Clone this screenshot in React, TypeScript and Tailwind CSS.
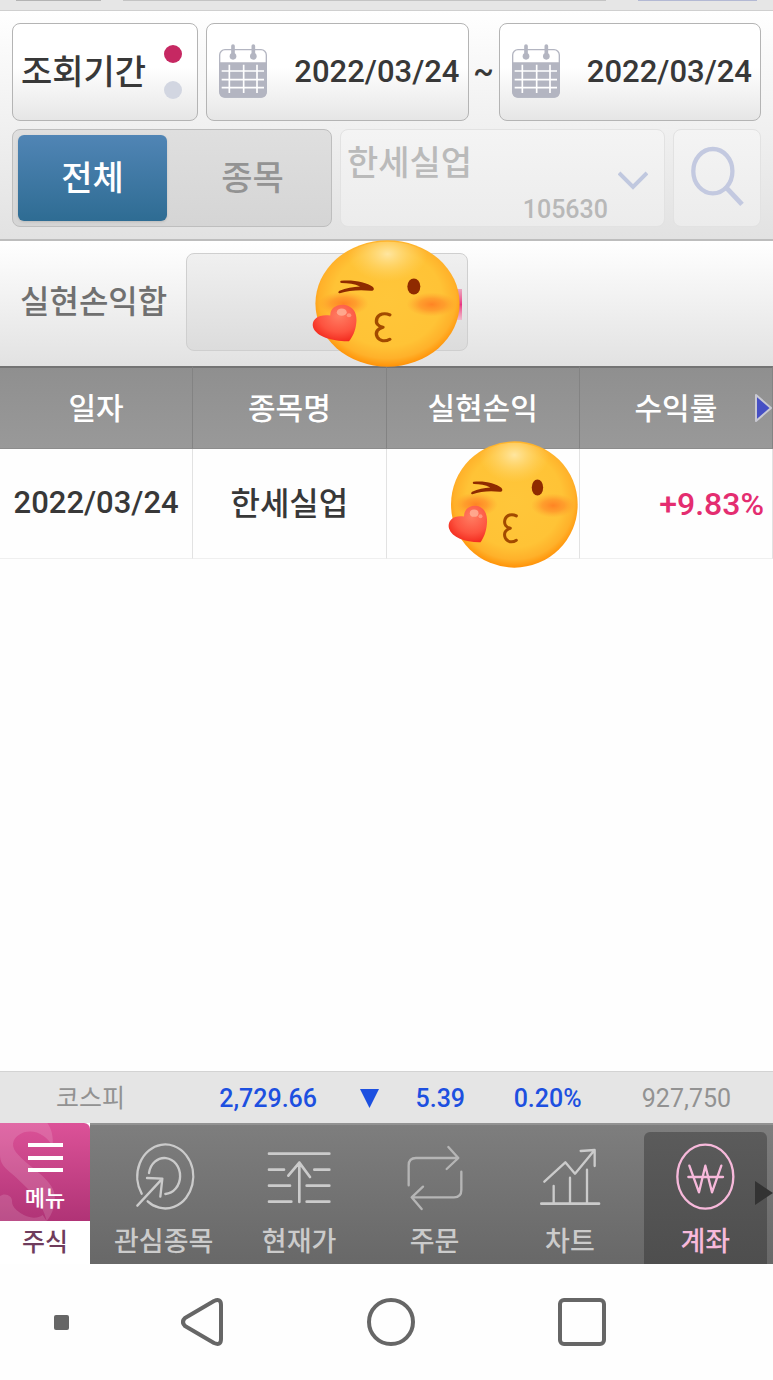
import React from 'react';

const KissEmoji = ({ className }: { className: string }) => {
  const id = React.useId().replace(/[^a-zA-Z0-9]/g, '');

  return (
    <svg viewBox="54 30 388 380" preserveAspectRatio="none" className={className} role="img" aria-label="가림 이모티콘">
      <defs>
        <radialGradient id={`${id}face`} cx="0.5" cy="0.46" r="0.54">
          <stop offset="0" stopColor="#ffc63a" />
          <stop offset="0.7" stopColor="#ffc336" />
          <stop offset="0.88" stopColor="#ffb12a" />
          <stop offset="1" stopColor="#ff9208" />
        </radialGradient>
        <radialGradient id={`${id}shine`}>
          <stop offset="0" stopColor="#ffe6a0" />
          <stop offset="1" stopColor="#ffd76a" stopOpacity="0" />
        </radialGradient>
        <radialGradient id={`${id}cheek`}>
          <stop offset="0" stopColor="#ff7d22" stopOpacity="0.9" />
          <stop offset="0.5" stopColor="#ff8526" stopOpacity="0.6" />
          <stop offset="1" stopColor="#ff9a2c" stopOpacity="0" />
        </radialGradient>
        <radialGradient id={`${id}heart`} cx="0.6" cy="0.3" r="0.75">
          <stop offset="0" stopColor="#ff7d62" />
          <stop offset="0.6" stopColor="#fd5440" />
          <stop offset="1" stopColor="#f2261a" />
        </radialGradient>
        <clipPath id={`${id}clip`}>
          <circle cx="252" cy="220" r="185" />
        </clipPath>
      </defs>
      <circle cx="252" cy="220" r="189" fill={`url(#${id}face)`} />
      <g clipPath={`url(#${id}clip)`}>
        <ellipse cx="252" cy="72" rx="105" ry="82" fill={`url(#${id}shine)`} />
      </g>
      <ellipse cx="137" cy="220" rx="66" ry="36" fill={`url(#${id}cheek)`} />
      <ellipse cx="368" cy="223" rx="66" ry="36" fill={`url(#${id}cheek)`} />
      <path
        d="M130 152C160 148 198 156 213 170C219 177 216 183 208 182C180 178 150 181 127 189C122 190 122 185 126 182C143 173 162 170 180 169C166 162 148 159 132 159C127 158 127 153 130 152Z"
        fill="#8f2b00"
      />
      <ellipse cx="321" cy="169" rx="17" ry="24" fill="#8f2b00" />
      <path
        d="M258 254C245 247 229 250 224 265C220 280 228 289 240 291C226 295 219 306 225 320C231 333 246 335 258 327"
        fill="none"
        stroke="#a24a00"
        strokeWidth="9"
        strokeLinecap="round"
        strokeLinejoin="round"
      />
      <path
        d="M151 333C108 334 66 320 57 292C51 269 70 250 102 256C101 236 117 222 138 224C165 229 173 252 170 279C168 302 160 321 151 333Z"
        fill={`url(#${id}heart)`}
      />
      <ellipse cx="132" cy="246" rx="13" ry="11" fill="#ffb49a" opacity="0.8" />
      <circle cx="151" cy="255" r="6" fill="#ffb49a" opacity="0.6" />
    </svg>
  );
};

const CalendarIcon = () => (
  <svg viewBox="0 0 144 162" className="h-[54px] w-12" fill="none">
    <rect x="2" y="17" width="140" height="142" rx="16" stroke="#b3b5c1" strokeWidth="4" />
    <path d="M1 55H143V144Q143 161 126 161H18Q1 161 1 144Z" fill="#b3b5c1" />
    <path d="M8 81H135M8 107H135M8 131H135M31 62V147M74 62V147M114 62V147" stroke="#fff" strokeWidth="5" />
    <path d="M42 6V35M103 6V35" stroke="#b3b5c1" strokeWidth="11" strokeLinecap="round" />
    <circle cx="42" cy="37" r="10" fill="#b3b5c1" />
    <circle cx="103" cy="37" r="10" fill="#b3b5c1" />
  </svg>
);

const DateField = ({ label }: { label: string }) => (
  <div className="flex h-[98px] min-w-0 flex-1 items-center rounded-lg border border-[#b4b4b4] bg-linear-to-b from-white from-45% to-[#e6e6e6] pr-2 pl-3">
    <button type="button" aria-label={`${label} 달력`} className="mb-0.5 shrink-0">
      <CalendarIcon />
    </button>
    <input
      type="text"
      aria-label={label}
      defaultValue="2022/03/24"
      className="w-full min-w-0 bg-transparent text-right text-[31px] leading-10 font-medium text-[#383838] outline-none"
    />
  </div>
);

const navItems = [
  {
    label: '관심종목',
    viewBox: '393 240 198 216',
    icon: (
      <>
        <path d="M425 401A84 96 0 1 1 443 424" />
        <path d="M447 339A47 54 0 1 1 496 402" />
        <path d="M412 437L487 356M441 354L487 356L481 410" />
      </>
    ),
  },
  {
    label: '현재가',
    viewBox: '48 240 198 216',
    icon: (
      <path
        strokeWidth="8"
        d="M57 281H238M57 329H102M193 329H238M57 377H120M170 377H238M57 425H124M170 425H238M148 426V308M115 347L148 308L180 351"
      />
    ),
  },
  {
    label: '주문',
    viewBox: '454 240 198 216',
    icon: (
      <path
        stroke="#b5b5b5"
        d="M477 376V316Q477 294 499 294H624M596 261L626 294L591 327M635 335V390Q635 412 613 412H487M520 380L486 412L516 447"
      />
    ),
  },
  {
    label: '차트',
    viewBox: '81 240 198 216',
    icon: (
      <>
        <path d="M131 378V430M180 353V430M231 329V430M103 365L166 307L195 341L252 272M212 273L254 270V318" />
        <path strokeWidth="8" d="M94 431H267" />
      </>
    ),
  },
  {
    label: '계좌',
    viewBox: '487 240 198 216',
    active: true,
    icon: (
      <>
        <ellipse cx="587" cy="350" rx="84" ry="96" />
        <path d="M539 317L568 397L587 317L607 397L635 317M536 351H640" />
      </>
    ),
  },
];

const App = () => {
  return (
    <div className="flex min-h-screen flex-col overflow-x-hidden bg-[#fefefe] font-['Roboto','Noto_Sans_CJK_KR',sans-serif] font-medium">
      <div className="flex h-[11px] items-start border-b border-[#cfcfcf] bg-[#e6e6e6] px-4">
        <div className="h-px w-[85px] bg-[#b4b4b4]" />
        <div className="mr-8 ml-[22px] h-px flex-1 bg-[#c4c4c4]" />
        <div className="h-px w-[119px] bg-[#b3b9d4]" />
      </div>

      <section className="flex flex-col gap-2 border-b-2 border-[#bdbdbd] bg-linear-to-b from-white to-[#e2e2e2] p-3">
        <div className="flex items-center">
          <button
            type="button"
            className="mr-2 flex h-[98px] w-[186px] shrink-0 items-center justify-between rounded-lg border border-[#b4b4b4] bg-linear-to-b from-white from-45% to-[#e6e6e6] pr-[15px] pl-2 text-[34px] text-[#383838]"
          >
            조회기간
            <span className="flex flex-col gap-[18px]">
              <span className="size-[18px] rounded-full bg-[#c62862]" />
              <span className="size-[18px] rounded-full bg-[#d2d6e1]" />
            </span>
          </button>
          <DateField label="시작일" />
          <span className="w-[30px] text-center text-[31px] text-[#383838]">~</span>
          <DateField label="종료일" />
        </div>

        <div className="flex gap-2">
          <div className="flex h-[98px] w-[320px] shrink-0 rounded-lg border border-[#bebebe] bg-linear-to-b from-[#dfdfdf] to-[#d5d5d5] p-[5px] text-[34px]">
            <button
              type="button"
              aria-pressed="true"
              className="w-[149px] rounded-md bg-linear-to-b from-[#5085b5] to-[#2e6c93] text-white shadow"
            >
              전체
            </button>
            <button type="button" aria-pressed="false" className="flex-1 pl-3 text-[#939393]">
              종목
            </button>
          </div>
          <div className="grid h-[98px] min-w-0 flex-1 rounded-lg border border-[#e2e2e2] bg-linear-to-b from-[#f4f4f4] to-[#ececec]">
            <select
              disabled
              aria-label="종목 선택"
              className="col-start-1 row-start-1 w-full appearance-none self-start bg-transparent px-1.5 pt-2 text-[34px] leading-[50px] text-[#bababa] opacity-100"
            >
              <option>한세실업</option>
            </select>
            <span className="pointer-events-none col-start-1 row-start-1 mr-14 self-end justify-self-end text-[25px] leading-8 text-[#b8b8b8]">
              105630
            </span>
            <svg
              viewBox="0 0 30 20"
              className="pointer-events-none col-start-1 row-start-1 mt-[41px] mr-4 h-5 w-[30px] justify-self-end"
              fill="none"
            >
              <path d="M1 2L15 16L29 2" stroke="#c0c8df" strokeWidth="4" />
            </svg>
          </div>
          <button
            type="button"
            aria-label="검색"
            disabled
            className="flex h-[98px] w-[88px] shrink-0 items-center justify-center rounded-lg border border-[#e2e2e2] bg-linear-to-b from-[#f4f4f4] to-[#ececec] pb-1"
          >
            <svg viewBox="926 438 164 184" className="h-[61px] w-[55px]" fill="none" stroke="#c3c9e0">
              <ellipse cx="994" cy="514" rx="59" ry="67" strokeWidth="13" />
              <path d="M1033 562L1082 614" strokeWidth="15" />
            </svg>
          </button>
        </div>
      </section>

      <section className="flex h-[125px] items-start bg-linear-to-b from-white to-[#e2e2e2] pt-3 pl-5">
        <label htmlFor="profit" className="w-[166px] text-[32px] leading-[98px] text-[#707070]">
          실현손익합
        </label>
        <div className="relative">
          <input
            id="profit"
            type="text"
            readOnly
            className="block h-[98px] w-[282px] rounded-lg border border-[#cfcfcf] bg-linear-to-b from-[#f0f0f0] to-[#dcdcdc] outline-none"
          />
          <span className="absolute top-9 right-1.5 h-[31px] w-2 bg-linear-to-b from-[#eaa6c0] via-[#e83584] to-[#ecbdd0]" />
          <KissEmoji className="absolute -top-[13px] right-2 z-10 h-[127px] w-[148px]" />
        </div>
      </section>

      <div className="relative">
        <table className="w-full table-fixed border-separate border-spacing-0 text-center">
          <thead className="bg-linear-to-b from-[#8f8f8f] to-[#999999] text-[30px] text-white">
            <tr className="h-[83px]">
              <th className="border-t-2 border-r border-b border-t-[#747474] border-r-[#838383] border-b-[#8c8c8c] font-medium">일자</th>
              <th className="border-t-2 border-r border-b border-t-[#747474] border-r-[#838383] border-b-[#8c8c8c] font-medium">종목명</th>
              <th className="border-t-2 border-r border-b border-t-[#747474] border-r-[#838383] border-b-[#8c8c8c] font-medium">실현손익</th>
              <th className="border-t-2 border-r border-b border-t-[#747474] border-r-[#838383] border-b-[#8c8c8c] font-medium">수익률</th>
            </tr>
          </thead>
          <tbody className="text-[#383838]">
            <tr className="h-[110px]">
              <td className="border-r border-b border-r-[#e2e2e2] border-b-[#efefef] text-[31px]">2022/03/24</td>
              <td className="border-r border-b border-r-[#e2e2e2] border-b-[#efefef] text-[32px]">한세실업</td>
              <td className="relative border-r border-b border-r-[#e2e2e2] border-b-[#efefef]">
                <KissEmoji className="absolute -top-2 right-px h-[127px] w-[130px]" />
              </td>
              <td className="border-r border-b border-r-[#e2e2e2] border-b-[#efefef] pr-2 text-right text-[32px] text-[#e42d70]">
                +9.83%
              </td>
            </tr>
          </tbody>
        </table>
        <button type="button" aria-label="다음 열" className="absolute top-[27px] right-0">
          <svg viewBox="0 0 19 30" className="h-[30px] w-[19px]">
            <path d="M2 2L17 15L2 28Z" fill="#464fc4" stroke="#c9c9d2" strokeWidth="2" strokeLinejoin="round" />
          </svg>
        </button>
      </div>

      <main className="flex-1" />

      <div className="grid h-[52px] grid-cols-[163fr_141fr_55fr_98fr_128fr_131fr] items-center border-t border-[#d3d3d3] bg-[#e5e5e5] pt-0.5 pl-14 text-[25px] text-[#1d50e0]">
        <span className="font-normal text-[#929292]">코스피</span>
        <span>2,729.66</span>
        <svg viewBox="0 0 19 19" className="size-[19px]">
          <path d="M0 0H19L9.5 19Z" fill="#1d50e0" />
        </svg>
        <span>5.39</span>
        <span>0.20%</span>
        <span className="font-normal text-[#929292]">927,750</span>
      </div>

      <nav className="relative flex h-[141px] bg-linear-to-b from-[#7e7e7e] to-[#686868] text-[27px]">
        <div className="z-10 flex w-[90px] shrink-0 flex-col bg-white">
          <button
            type="button"
            className="relative flex h-[98px] flex-col items-center overflow-hidden rounded-tr-md bg-linear-to-b from-[#dc5298] to-[#b03376] pt-5 text-[22px] leading-8 text-white"
          >
            <svg viewBox="0 0 270 294" className="absolute inset-0 size-full" fill="none" stroke="#fff" strokeOpacity="0.14">
              <path
                d="M142 0C156 20 160 42 158 70C140 38 108 18 72 28C40 40 30 64 48 88C82 130 146 160 162 206C170 240 158 272 140 294C128 236 73 184 29 147C8 128 0 116 0 95V0Z"
                fill="#fff"
                fillOpacity="0.14"
                stroke="none"
              />
              <path
                d="M0 219C15 207 38 219 36 235C35 254 58 270 80 280C99 287 116 285 128 276L140 294H0Z"
                fill="#fff"
                fillOpacity="0.14"
                stroke="none"
              />
            </svg>
            <svg viewBox="0 0 35 30" className="relative mb-2.5 h-[30px] w-[35px]" stroke="#fff" strokeWidth="4">
              <path d="M0 2H35M0 15H35M0 27H35" />
            </svg>
            <span className="relative">메뉴</span>
          </button>
          <a href="#stock" className="text-center text-[25px] leading-[43px] text-[#6f3c5c]">
            주식
          </a>
        </div>
        <div className="grid flex-1 grid-cols-5 border-t-2 border-[#929292] pl-1.5">
          {navItems.map((item) => (
            <a
              key={item.label}
              href={`#${item.label}`}
              aria-current={item.active ? 'page' : undefined}
              className={
                item.active
                  ? 'mx-1.5 mt-[7px] flex flex-col items-center rounded-t-md bg-linear-to-b from-[#5b5b5b] to-[#4e4e4e] pt-2 text-[#f7b9db]'
                  : 'mx-1.5 mt-[7px] flex flex-col items-center pt-2 text-[#cbcbcb]'
              }
            >
              <svg
                viewBox={item.viewBox}
                className="mb-2.5 h-[72px] w-[66px] shrink-0"
                fill="none"
                stroke="currentColor"
                strokeWidth="7"
                strokeLinecap="round"
                strokeLinejoin="round"
              >
                {item.icon}
              </svg>
              <span className="leading-10 whitespace-nowrap">{item.label}</span>
            </a>
          ))}
        </div>
        <svg viewBox="0 0 18 24" className="absolute top-[58px] right-0 h-6 w-[18px]">
          <path d="M0 0L18 12L0 24Z" fill="#333333" />
        </svg>
      </nav>

      <div className="grid h-[116px] grid-cols-[123fr_157fr_222fr_160fr_111fr] items-center justify-items-center bg-[#fefefe] text-[#666666]">
        <span className="size-[15px] rounded-xs bg-current" />
        <button type="button" aria-label="뒤로">
          <svg viewBox="0 0 42 48" className="h-12 w-[42px]" fill="none" stroke="currentColor" strokeWidth="4">
            <path d="M4 20L33 3Q40 0 40 7V41Q40 48 33 45L4 28Q0 24 4 20Z" strokeLinejoin="round" />
          </svg>
        </button>
        <button type="button" aria-label="홈" className="size-12 rounded-full border-4 border-current" />
        <button type="button" aria-label="최근 앱" className="size-12 rounded-md border-4 border-current" />
      </div>
    </div>
  );
};

export default App;
